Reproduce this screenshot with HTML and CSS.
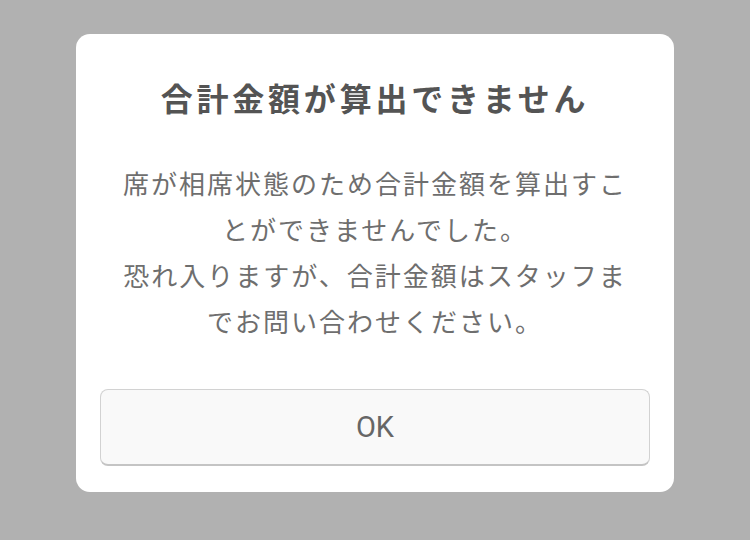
FILE: index.html
```html
<!DOCTYPE html>
<html lang="ja">
<head>
<meta charset="utf-8">
<link rel="stylesheet" href="styles.css">
</head>
<body>
<div class="overlay">
  <div class="dialog">
    <h1 class="title">合計金額が算出できません</h1>
    <p class="message">席が相席状態のため合計金額を算出すことができませんでした。<br>恐れ入りますが、合計金額はスタッフまでお問い合わせください。</p>
    <button class="ok">OK</button>
  </div>
</div>
</body>
</html>
```

FILE: styles.css
```css
html, body {
  margin: 0;
  padding: 0;
  width: 750px;
  height: 540px;
  background: #b1b1b1;
  overflow: hidden;
}
.overlay {
  display: flex;
  justify-content: center;
  padding-top: 34px;
}
.dialog {
  width: 598px;
  box-sizing: border-box;
  background: #ffffff;
  border-radius: 14px;
  padding: 43px 24px 26px;
  display: flex;
  flex-direction: column;
  align-items: center;
  font-family: "Noto Sans CJK JP", "Noto Sans", sans-serif;
}
.title {
  margin: 0;
  font-size: 32px;
  line-height: 40px;
  font-weight: 700;
  letter-spacing: 3.8px;
  color: #545454;
  text-align: center;
}
.message {
  margin: 43px 0 0;
  width: 512px;
  font-size: 26px;
  line-height: 46px;
  letter-spacing: 2px;
  color: #6e6e6e;
  text-align: center;
}
.ok {
  margin-top: 45px;
  width: 100%;
  height: 77px;
  box-sizing: border-box;
  background: #f9f9f9;
  border: 1px solid #d2d2d2;
  border-bottom: 2px solid #c4c4c4;
  border-radius: 8px;
  font-family: Roboto, "Noto Sans", sans-serif;
  font-size: 29px;
  color: #666666;
  padding: 0;
}
```
